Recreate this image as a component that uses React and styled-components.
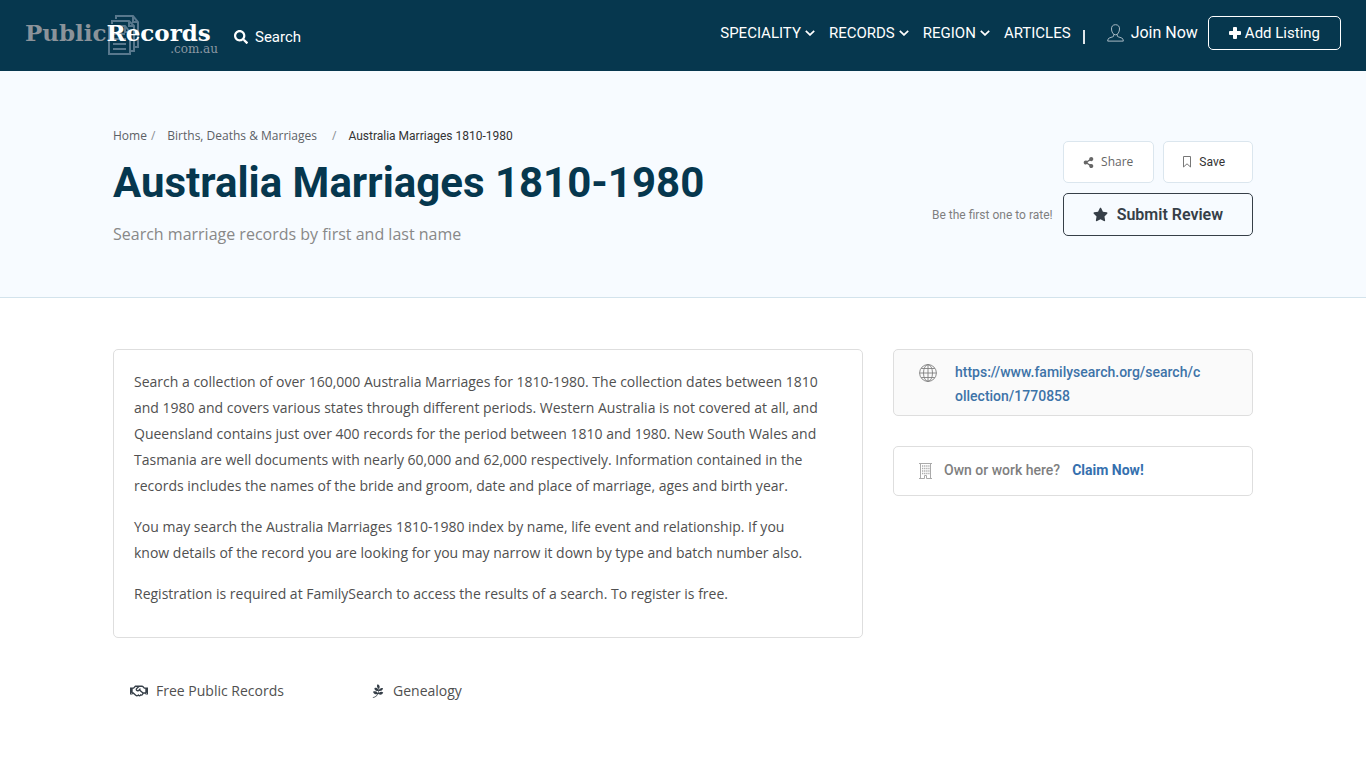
import React from "react";
import styled, { createGlobalStyle } from "styled-components";
import { FaSearch, FaStar, FaShareAlt, FaRegHandshake, FaPagelines } from "react-icons/fa";

const Global = createGlobalStyle`
  *, *::before, *::after { box-sizing: border-box; }
  body { margin: 0; background: #fff; color: #505050; font: 14px/26px "Open Sans", sans-serif; }
  a { color: inherit; text-decoration: none; }
  button { font: inherit; cursor: pointer; }
  h1, p { margin: 0; }
  svg { flex: none; }
`;

const Header = styled.header`
  display: flex;
  align-items: flex-start;
  min-height: 71px;
  padding: 0 25px;
  background: #06374e;
  color: #fff;
  font-family: Roboto, sans-serif;
  font-weight: 400;
  font-size: 15px;
  line-height: 24px;
`;

const Logo = styled.a`
  position: relative;
  display: grid;
  width: 193px;
  padding-top: 22px;
  white-space: nowrap;
  font: bold 23px/22px "DejaVu Serif", serif;
`;

const LogoPages = styled.svg`
  position: absolute;
  left: 82px;
  top: 14px;
`;

const LogoName = styled.span`
  position: relative;
  color: #fff;
`;

const LogoMuted = styled.span`
  color: #8b939a;
`;

const LogoDomain = styled.small`
  position: relative;
  justify-self: end;
  color: #8b98a3;
  font-size: 12px;
  font-weight: 400;
  line-height: 10px;
`;

const SearchButton = styled.button`
  display: flex;
  align-items: center;
  gap: 7px;
  margin: 25px 0 0 16px;
  padding: 0;
  border: 0;
  background: none;
  color: inherit;
`;

const Nav = styled.nav`
  display: flex;
  gap: 14px;
  margin: 21px 0 0 auto;
`;

const NavLink = styled.a`
  display: flex;
  align-items: center;
  gap: 4px;
`;

const Divider = styled.span`
  width: 2px;
  height: 14px;
  margin: 30px 22px 0 12px;
  background: #dfe6ea;
`;

const Join = styled.a`
  display: flex;
  align-items: center;
  gap: 7px;
  margin-top: 21px;
  font-size: 16px;
`;

const AddListing = styled.a`
  display: flex;
  align-items: center;
  gap: 4px;
  margin: 16px 0 0 10px;
  padding: 4px 20px;
  border: 1px solid #fff;
  border-radius: 5px;
`;

const Hero = styled.section`
  background: #f7fbff;
  border-bottom: 1px solid #d3e3ec;
`;

const Container = styled.div`
  display: flex;
  justify-content: space-between;
  gap: 30px;
  max-width: 1170px;
  margin: 0 auto;
  padding: ${(p) => p.$top}px 15px ${(p) => p.$bottom}px;
`;

const Crumbs = styled.nav`
  display: flex;
  font-size: 12px;
  line-height: 20px;
  color: #5c6166;
`;

const Slash = styled.span`
  color: #8a8f94;
  margin: 0 12px 0 ${(p) => p.$before}px;
`;

const Current = styled.span`
  font-family: Roboto, sans-serif;
  color: #333;
`;

const Title = styled.h1`
  margin-top: 12px;
  color: #06374e;
  font: bold 42px/50px Roboto, sans-serif;
`;

const Tagline = styled.p`
  margin-top: 13px;
  color: #888;
  font-size: 16px;
`;

const Actions = styled.div`
  display: grid;
  align-content: start;
  justify-items: end;
  gap: 10px;
  padding-top: 15px;
`;

const ActionRow = styled.div`
  display: flex;
  align-items: center;
  gap: ${(p) => p.$gap}px;
`;

const SmallButton = styled.button`
  display: flex;
  align-items: center;
  gap: 7px;
  height: 42px;
  padding: 0 ${(p) => p.$end}px 0 ${(p) => p.$start}px;
  border: 1px solid #dbe6ee;
  border-radius: 5px;
  background: #fff;
  color: ${(p) => p.$color};
  font-size: 12px;
  font-family: ${(p) => p.$font}, sans-serif;
`;

const RateNote = styled.span`
  color: #7f7f7f;
  font: 12px/20px Roboto, sans-serif;
`;

const Submit = styled.button`
  display: flex;
  align-items: center;
  gap: 9px;
  height: 43px;
  padding: 0 29px;
  border: 1px solid #363f48;
  border-radius: 5px;
  background: transparent;
  color: #363f48;
  font: 600 16px/24px Roboto, sans-serif;
`;

const Main = styled.main`
  flex: 1 1 750px;
  min-width: 0;
`;

const Aside = styled.aside`
  display: grid;
  align-content: start;
  gap: 30px;
  flex: 0 1 360px;
`;

const Article = styled.article`
  display: grid;
  gap: 15px;
  padding: 19px 40px 30px 20px;
  border: 1px solid #dedede;
  border-radius: 5px;
`;

const Features = styled.ul`
  display: grid;
  grid-template-columns: repeat(3, 1fr);
  margin: 40px 0 0;
  padding: 0 10px 0 17px;
  list-style: none;
`;

const Feature = styled.li`
  display: flex;
  align-items: center;
  gap: 8px;
`;

const Panel = styled.section`
  display: flex;
  align-items: ${(p) => (p.$center ? "center" : "flex-start")};
  gap: ${(p) => p.$gap}px;
  padding: 10px 50px ${(p) => (p.$center ? 12 : 7)}px 25px;
  border: 1px solid #dedede;
  border-radius: 5px;
  background: ${(p) => p.$bg};
  color: #7f7f7f;
  font-family: Roboto, sans-serif;
  font-weight: 500;
`;

const SiteLink = styled.a`
  color: #3d73a8;
  line-height: 24px;
  word-break: break-all;
`;

const ClaimLink = styled.a`
  color: #3570ae;
  font-weight: bold;
`;

const GlobeIcon = styled.svg`
  margin-top: 4px;
`;

const Pages = () => (
  <LogoPages width="36" height="43" viewBox="0 0 36 43" fill="none" stroke="#58788d" strokeWidth="2" aria-hidden="true">
    <path d="M9 5V2h17l5 6v25h-4" />
    <path d="M26 2v6h5" />
    <path d="M5 10V7h17l5 5v25h-3" />
    <path d="M22 7v5h5" />
    <path d="M2 12h16l5 6v22H2z" />
    <path d="M18 12v6h5M6 20h12M6 25h13M6 30h13M6 35h13" />
  </LogoPages>
);

const Chevron = () => (
  <svg width="10" height="6" viewBox="0 0 10 6" fill="none" stroke="currentColor" strokeWidth="1.700" aria-hidden="true">
    <path d="M.8.8 5 4.900 9.200.8" />
  </svg>
);

const Plus = () => (
  <svg width="12" height="12" viewBox="0 0 12 12" fill="currentColor" aria-hidden="true">
    <path d="M4.900 0h2.200q.9 0 .9.900V4h3.100q.9 0 .9.900v2.200q0 .9-.9.900H8v3.100q0 .9-.9.900H4.900q-.9 0-.9-.9V8H.9Q0 8 0 7.100V4.900Q0 4 .9 4H4V.9Q4 0 4.900 0z" />
  </svg>
);

const UserIcon = () => (
  <svg width="17" height="18" viewBox="0 0 17 18" fill="none" stroke="#a9bac4" aria-hidden="true">
    <path d="M8.500.7C5.800.7 4.400 2.400 4.500 5c.1 2.800 1.500 5.800 4 5.800s3.900-3 4-5.800C12.600 2.400 11.200.7 8.500.7z" />
    <path d="M6.700 10.300v1.900c0 .8-5.200 1.300-5.700 3-.2.600-.3 1.300-.3 1.900h15.600c0-.6-.1-1.300-.3-1.900-.5-1.700-5.700-2.200-5.700-3v-1.900" />
  </svg>
);

const Bookmark = () => (
  <svg width="10" height="12" viewBox="0 0 10 12" fill="none" stroke="#777" aria-hidden="true">
    <path d="M1.500.5h7v10.500L5 7.800 1.500 11z" />
  </svg>
);

const Globe = () => (
  <GlobeIcon width="18" height="18" viewBox="0 0 18 18" fill="none" stroke="#808080" strokeWidth=".9" aria-hidden="true">
    <circle cx="9" cy="9" r="8.400" />
    <ellipse cx="9" cy="9" rx="4.500" ry="8.400" />
    <path d="M9 .6v16.800M.6 9h16.800M2.200 4.500h13.600M2.200 13.500h13.600" />
  </GlobeIcon>
);

const Building = () => (
  <svg width="13" height="17" viewBox="0 0 13 17" fill="none" stroke="#aaa" aria-hidden="true">
    <path d="M1.500 16V1.500h10V16M0 1.500h13M0 16.500h5.500v-3h2v3H13" />
    <path d="M3 4h7.500M3 6.500h7.500M3 9h7.500M3 11.500h7.500" strokeWidth="1.500" strokeDasharray="1.300 .8" />
  </svg>
);

export default function App() {
  return (
    <>
      <Global />
      <Header>
        <Logo href="#" aria-label="PublicRecords.com.au">
          <Pages />
          <LogoName><LogoMuted>Public</LogoMuted>Records</LogoName>
          <LogoDomain>.com.au</LogoDomain>
        </Logo>
        <SearchButton type="button"><FaSearch size={14} />Search</SearchButton>
        <Nav aria-label="Main">
          {["SPECIALITY", "RECORDS", "REGION"].map((label) => (
            <NavLink href="#" key={label}>{label}<Chevron /></NavLink>
          ))}
          <NavLink href="#">ARTICLES</NavLink>
        </Nav>
        <Divider />
        <Join href="#"><UserIcon />Join Now</Join>
        <AddListing href="#"><Plus />Add Listing</AddListing>
      </Header>
      <Hero>
        <Container $top={55} $bottom={50}>
          <div>
            <Crumbs aria-label="Breadcrumb">
              <a href="#">Home</a><Slash $before={4}>/</Slash>
              <a href="#">Births, Deaths &amp; Marriages</a><Slash $before={15}>/</Slash>
              <Current>Australia Marriages 1810-1980</Current>
            </Crumbs>
            <Title>Australia Marriages 1810-1980</Title>
            <Tagline>Search marriage records by first and last name</Tagline>
          </div>
          <Actions>
            <ActionRow $gap={9}>
              <SmallButton type="button" $start={19} $end={20} $color="#666" $font="Open Sans"><FaShareAlt size={11} />Share</SmallButton>
              <SmallButton type="button" $start={18} $end={27} $color="#333" $font="Roboto"><Bookmark />Save</SmallButton>
            </ActionRow>
            <ActionRow $gap={10}>
              <RateNote>Be the first one to rate!</RateNote>
              <Submit type="button"><FaStar size={15} />Submit Review</Submit>
            </ActionRow>
          </Actions>
        </Container>
      </Hero>
      <Container $top={51} $bottom={40}>
        <Main>
          <Article>
            <p>Search a collection of over 160,000 Australia Marriages for 1810-1980. The collection dates between 1810 and 1980 and covers various states through different periods. Western Australia is not covered at all, and Queensland contains just over 400 records for the period between 1810 and 1980. New South Wales and Tasmania are well documents with nearly 60,000 and 62,000 respectively. Information contained in the records includes the names of the bride and groom, date and place of marriage, ages and birth year.</p>
            <p>You may search the Australia Marriages 1810-1980 index by name, life event and relationship. If you know details of the record you are looking for you may narrow it down by type and batch number also.</p>
            <p>Registration is required at FamilySearch to access the results of a search. To register is free.</p>
          </Article>
          <Features>
            <Feature><FaRegHandshake size={18} color="#363f48" />Free Public Records</Feature>
            <Feature><FaPagelines size={14} color="#363f48" />Genealogy</Feature>
          </Features>
        </Main>
        <Aside>
          <Panel $gap={18} $bg="#fafafa">
            <Globe />
            <SiteLink href="#">https://www.familysearch.org/search/collection/1770858</SiteLink>
          </Panel>
          <Panel $center $gap={12} $bg="#fff">
            <Building />
            <span>Own or work here?</span>
            <ClaimLink href="#">Claim Now!</ClaimLink>
          </Panel>
        </Aside>
      </Container>
    </>
  );
}
